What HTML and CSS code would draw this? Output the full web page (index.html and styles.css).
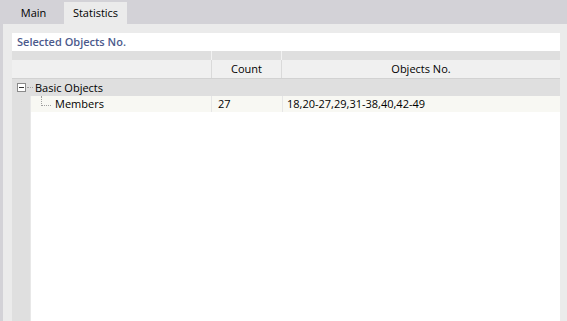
FILE: index.html
```html
<!DOCTYPE html>
<html>
<head>
<meta charset="utf-8">
<link rel="stylesheet" href="styles.css">
</head>
<body>
<div class="app">
  <div class="tabs">
    <div class="tab">Main</div>
    <div class="tab active">Statistics</div>
  </div>
  <div class="panel">
    <div class="title">Selected Objects No.</div>
    <div class="grid">
      <div class="hrow1">
        <div class="c1"></div><div class="c2"></div><div class="c3"></div>
      </div>
      <div class="hrow2">
        <div class="c1"></div><div class="c2">Count</div><div class="c3">Objects No.</div>
      </div>
      <div class="group">
        <span class="exp"><svg width="9" height="9" viewBox="0 0 9 9"><rect x="0.5" y="0.5" width="8" height="8" fill="#fff" stroke="#8a8a8a"/><path d="M2 4.5h5" stroke="#333" stroke-width="1"/></svg></span>
        <span class="hdots"></span>
        <span class="gtext">Basic Objects</span>
      </div>
      <div class="body">
        <div class="gutter"></div>
        <div class="rows">
          <div class="row">
            <div class="c1"><span class="tline"></span><span>Members</span></div>
            <div class="c2">27</div>
            <div class="c3">18,20-27,29,31-38,40,42-49</div>
          </div>
        </div>
      </div>
    </div>
  </div>
</div>
</body>
</html>
```
FILE: styles.css
```css
html, body { margin: 0; padding: 0; }
body {
  width: 567px; height: 321px; overflow: hidden;
  font-family: "Open Sans", "Noto Sans", sans-serif;
  font-size: 11px; color: #000;
  background: #d3d2d7;
}
.app { display: flex; flex-direction: column; height: 321px; }
.tabs { display: flex; align-items: flex-end; height: 24px; padding-left: 3px; }
.tab { height: 22px; line-height: 21px; padding: 0 0; width: 61px; text-align: center; }
.tab.active { background: #ebebeb; width: 63px; }
.panel {
  flex: 1; margin-left: 3px; background: #ebebeb;
  padding: 9px 7px 0 9px; display: flex; flex-direction: column;
}
.title {
  background: #fff; height: 18px; line-height: 18px; padding-left: 5px;
  color: #4c5a8c; font-weight: 600;
}
.grid { flex: 1; display: flex; flex-direction: column; }
.hrow1 { display: flex; height: 9px; background: #dfdfdf; }
.hrow1 .c1 { width: 199px; border-right: 1px solid #f2f2f2; }
.hrow1 .c2 { width: 69px; border-right: 1px solid #f2f2f2; }
.hrow2 {
  display: flex; height: 18px; line-height: 18px; background: #f0f0f0;
  border-bottom: 1px solid #d2d2d2;
}
.hrow2 .c1 { width: 199px; border-right: 1px solid #dadada; }
.hrow2 .c2 { width: 69px; border-right: 1px solid #dadada; text-align: center; }
.hrow2 .c3 { flex: 1; text-align: center; }
.group {
  display: flex; align-items: center; height: 17px; background: #dfdfdf;
}
.exp { display: flex; margin-left: 5px; width: 9px; height: 9px; }
.hdots { width: 6px; margin-left: 1px; border-top: 1px dotted #a0a0a0; height: 0; }
.gtext { margin-left: 2px; }
.body { flex: 1; display: flex; }
.gutter { width: 18px; background: #dfdfdf; border-right: 1px solid #e8e8e8; }
.rows { flex: 1; background: #fff; }
.row { display: flex; height: 16px; line-height: 16px; background: #f8f8f3; }
.row .c1 { width: 180px; display: flex; align-items: flex-start; }
.tline {
  width: 9px; height: 9px; margin-left: 10px; margin-right: 4px;
  border-left: 1px dotted #a0a0a0; border-bottom: 1px dotted #a0a0a0;
}
.row .c2 { width: 64px; padding-left: 6px; border-left: 1px solid #e6e6e6; }
.row .c3 { flex: 1; padding-left: 4px; border-left: 1px solid #e6e6e6; }
```
